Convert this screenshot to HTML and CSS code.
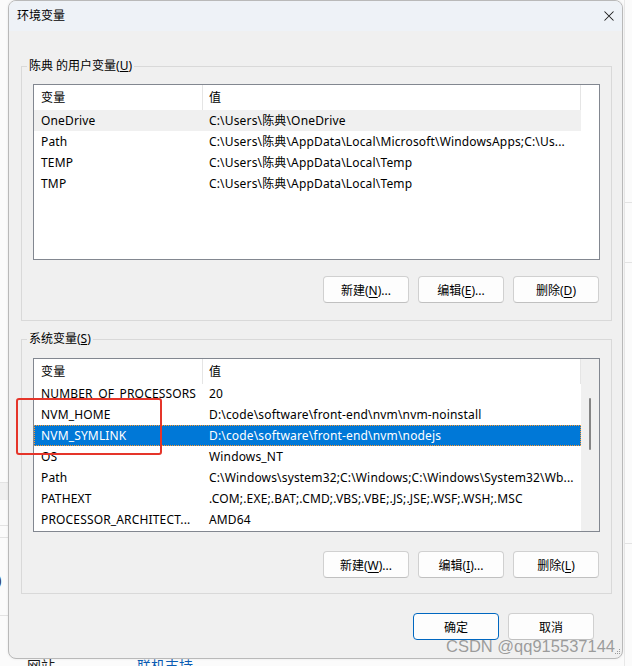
FILE: index.html
```html
<!DOCTYPE html>
<html lang="zh-CN">
<head>
<meta charset="utf-8">
<title>环境变量</title>
<link rel="stylesheet" href="styles.css">
</head>
<body>
<div class="desktop">
  <!-- settings page showing behind the dialog -->
  <div class="backdrop">
    <span class="bd-line bd-l1"></span>
    <span class="bd-band"></span>
    <span class="bd-line bd-l2"></span>
    <span class="bd-line bd-l3"></span>
    <span class="bd-line bd-l4"></span>
    <span class="bd-paren">)</span>
    <span class="bd-vline"></span>
    <span class="bd-line bd-r1"></span>
    <span class="bd-line bd-r2"></span>
    <span class="bd-line bd-r3"></span>
    <span class="bd-link bd-site">网站</span>
    <span class="bd-link bd-support">联机支持</span>
  </div>

  <section class="dialog">
    <header class="titlebar">
      <span class="title">环境变量</span>
      <button class="close" type="button" aria-label="关闭">
        <svg width="10" height="10" viewBox="0 0 10 10"><path d="M0.5 0.5 L9.5 9.5 M9.5 0.5 L0.5 9.5" stroke="#1b1b1b" stroke-width="1.05" fill="none"/></svg>
      </button>
    </header>

    <div class="dialog-body">
      <fieldset class="group group-user">
        <legend>陈典 的用户变量(<u>U</u>)</legend>
        <div class="list list-user">
          <div class="list-main">
            <div class="list-head">
              <span class="cell name">变量</span>
              <span class="cell value">值</span>
            </div>
            <div class="list-rows">
              <div class="row row-dim"><span class="cell name">OneDrive</span><span class="cell value">C:\Users\陈典\OneDrive</span></div>
              <div class="row"><span class="cell name">Path</span><span class="cell value">C:\Users\陈典\AppData\Local\Microsoft\WindowsApps;C:\Us...</span></div>
              <div class="row"><span class="cell name">TEMP</span><span class="cell value">C:\Users\陈典\AppData\Local\Temp</span></div>
              <div class="row"><span class="cell name">TMP</span><span class="cell value">C:\Users\陈典\AppData\Local\Temp</span></div>
            </div>
          </div>
          <div class="list-filler"></div>
        </div>
        <div class="actions">
          <button class="btn" type="button">新建(<u>N</u>)...</button>
          <button class="btn" type="button">编辑(<u>E</u>)...</button>
          <button class="btn" type="button">删除(<u>D</u>)</button>
        </div>
      </fieldset>

      <fieldset class="group group-system">
        <legend>系统变量(<u>S</u>)</legend>
        <div class="list list-system">
          <div class="list-main">
            <div class="list-head">
              <span class="cell name">变量</span>
              <span class="cell value">值</span>
            </div>
            <div class="list-rows scrolled">
              <div class="row"><span class="cell name">NUMBER_OF_PROCESSORS</span><span class="cell value">20</span></div>
              <div class="row"><span class="cell name">NVM_HOME</span><span class="cell value">D:\code\software\front-end\nvm\nvm-noinstall</span></div>
              <div class="row row-selected"><span class="cell name">NVM_SYMLINK</span><span class="cell value">D:\code\software\front-end\nvm\nodejs</span></div>
              <div class="row"><span class="cell name">OS</span><span class="cell value">Windows_NT</span></div>
              <div class="row"><span class="cell name">Path</span><span class="cell value">C:\Windows\system32;C:\Windows;C:\Windows\System32\Wb...</span></div>
              <div class="row"><span class="cell name">PATHEXT</span><span class="cell value">.COM;.EXE;.BAT;.CMD;.VBS;.VBE;.JS;.JSE;.WSF;.WSH;.MSC</span></div>
              <div class="row"><span class="cell name">PROCESSOR_ARCHITECT...</span><span class="cell value">AMD64</span></div>
            </div>
          </div>
          <div class="scrollbar"><span class="thumb"></span></div>
        </div>
        <div class="actions">
          <button class="btn" type="button">新建(<u>W</u>)...</button>
          <button class="btn" type="button">编辑(<u>I</u>)...</button>
          <button class="btn" type="button">删除(<u>L</u>)</button>
        </div>
      </fieldset>

      <div class="footer">
        <button class="btn btn-default" type="button">确定</button>
        <button class="btn" type="button">取消</button>
      </div>
    </div>

    <svg class="grip" width="6" height="6" viewBox="0 0 6 6">
      <rect x="4" y="0" width="1" height="1" fill="#9a9a9a"/>
      <rect x="2" y="2" width="1" height="1" fill="#9a9a9a"/>
      <rect x="4" y="2" width="1" height="1" fill="#9a9a9a"/>
      <rect x="0" y="4" width="1" height="1" fill="#9a9a9a"/>
      <rect x="2" y="4" width="1" height="1" fill="#9a9a9a"/>
      <rect x="4" y="4" width="1" height="1" fill="#9a9a9a"/>
    </svg>
  </section>

  <span class="annotation"></span>
  <span class="watermark">CSDN @qq915537144</span>
</div>
</body>
</html>
```

FILE: styles.css
```css
* {
  box-sizing: border-box;
}

html,
body {
  margin: 0;
  padding: 0;
}

body {
  font-family: "Noto Sans", "Noto Sans CJK SC", sans-serif;
  font-size: 12px;
  color: #000;
  background: #fbfbfb;
  overflow: hidden;
}

.desktop {
  position: relative;
  width: 632px;
  height: 666px;
  padding-left: 8px;
  overflow: hidden;
}

/* ---- page behind the dialog ---- */
.backdrop {
  position: absolute;
  inset: 0;
}

.bd-line {
  position: absolute;
  height: 1px;
  background: #e3e3e3;
}

.bd-l1 { left: 0; width: 8px; top: 482px; }
.bd-l2 { left: 0; width: 8px; top: 525px; }
.bd-l3 { left: 0; width: 8px; top: 537px; }
.bd-l4 { left: 0; width: 8px; top: 615px; }

.bd-band {
  position: absolute;
  left: 0;
  top: 483px;
  width: 8px;
  height: 17px;
  background: #f0f0f0;
}

.bd-paren {
  position: absolute;
  left: -3px;
  top: 569px;
  font-size: 15px;
  color: #333;
}

.bd-vline {
  position: absolute;
  left: 624px;
  top: 0;
  width: 1px;
  height: 666px;
  background: #e8e8e8;
}

.bd-r1 { left: 625px; width: 7px; top: 202px; }
.bd-r2 { left: 625px; width: 7px; top: 262px; }
.bd-r3 { left: 625px; width: 7px; top: 543px; }

.bd-link {
  position: absolute;
  top: 655px;
  font-size: 14px;
  font-family: "Noto Sans CJK SC", sans-serif;
}

.bd-site {
  left: 27px;
  color: #1a1a1a;
}

.bd-support {
  left: 137px;
  color: #0a5cb3;
}

/* ---- dialog window ---- */
.dialog {
  position: relative;
  z-index: 1;
  width: 615px;
  height: 659px;
  display: flex;
  flex-direction: column;
  background: #f0f0f0;
  border: 1px solid #b9b9b9;
  border-radius: 8px;
  overflow: hidden;
  box-shadow: 0 0 3px rgba(0, 0, 0, 0.08);
}

.titlebar {
  flex: none;
  height: 30px;
  display: flex;
  align-items: center;
  justify-content: space-between;
  padding: 0 7px 1px 8px;
  background: #eef2f7;
}

.title {
  font-size: 12px;
  line-height: 16px;
}

.close {
  width: 12px;
  height: 12px;
  padding: 1px;
  border: 0;
  background: none;
  display: flex;
}

.dialog-body {
  flex: 1;
  display: flex;
  flex-direction: column;
  padding: 27px 10px 0 12px;
}

/* ---- group boxes ---- */
.group {
  margin: 0;
  padding: 0 11px 17px;
  border: 1px solid #d9d9d9;
  min-width: 0;
}

.group legend {
  margin-left: -6px;
  padding: 0 2px;
  line-height: 16px;
  height: 16px;
}

.group-system {
  margin-top: 10px;
  padding-bottom: 15px;
}

/* ---- list views ---- */
.list {
  display: flex;
  margin-top: 10px;
  height: 176px;
  border: 1px solid #828790;
  background: #fff;
}

.list-system {
  margin-top: 11px;
  height: 174px;
}

.list-main {
  width: 547px;
  display: flex;
  flex-direction: column;
  overflow: hidden;
}

.list-head {
  position: relative;
  z-index: 1;
  flex: none;
  display: flex;
  height: 25px;
  line-height: 25px;
  background: #fff;
}

.list-head .cell {
  border-right: 1px solid #e5e5e5;
}

.list-rows.scrolled {
  margin-top: -1px;
}

.row {
  display: flex;
  height: 21px;
  line-height: 21px;
}

.cell {
  white-space: nowrap;
  overflow: hidden;
  letter-spacing: 0.16px;
}

.cell.name {
  flex: none;
  width: 169px;
  padding-left: 7px;
}

.cell.value {
  flex: 1;
  padding-left: 6px;
}

.row-dim {
  background: #f0f0f0;
}

.row-selected {
  background: #0078d7;
  color: #fff;
  outline: 1px dotted #ff9a2e;
  outline-offset: -1px;
}

.list-filler {
  flex: 1;
}

.scrollbar {
  position: relative;
  flex: 1;
  background: #f0f0f0;
}

.thumb {
  position: absolute;
  left: 8px;
  top: 39px;
  width: 2px;
  height: 52px;
  border-radius: 1px;
  background: #858585;
}

/* ---- buttons ---- */
.actions {
  display: flex;
  justify-content: flex-end;
  gap: 9px;
  margin-top: 16px;
  padding-right: 1px;
}

.group-system .actions {
  margin-top: 19px;
}

.btn {
  width: 86px;
  height: 27px;
  padding: 0;
  font: inherit;
  color: #000;
  background: #fdfdfd;
  border: 1px solid #d0d0d0;
  border-bottom-color: #c0c0c0;
  border-radius: 4px;
}

.btn u {
  text-underline-offset: 2px;
}

.footer {
  display: flex;
  justify-content: flex-end;
  gap: 9px;
  margin-top: 19px;
  padding-right: 18px;
}

.btn-default {
  border: 1px solid #0067c0;
}

.grip {
  position: absolute;
  right: 1px;
  bottom: 3px;
}

/* ---- overlays ---- */
.annotation {
  position: absolute;
  z-index: 2;
  left: 16px;
  top: 398px;
  width: 146px;
  height: 57px;
  border: 2px solid #e5352a;
  border-radius: 3px;
}

.watermark {
  position: absolute;
  z-index: 2;
  left: 446px;
  top: 637px;
  font-family: "Liberation Sans", sans-serif;
  font-size: 16.5px;
  color: rgba(140, 140, 140, 0.85);
  white-space: nowrap;
}
```
